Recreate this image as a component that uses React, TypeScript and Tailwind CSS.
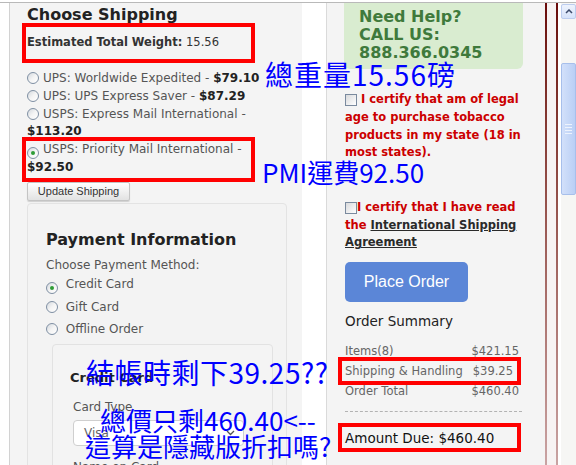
import React from "react";

function Radio({ checked = false }: { checked?: boolean }) {
  return (
    <span className="inline-flex items-center justify-center w-[12px] h-[12px] rounded-full border border-[#7f8fa3] bg-gradient-to-br from-[#d3d8de] via-[#f4f4f4] to-white align-[-2px] mr-[4px]">
      {checked && <span className="block w-[4px] h-[4px] rounded-full bg-[#2f9c36]" />}
    </span>
  );
}

function Checkbox({ gap = true }: { gap?: boolean }) {
  return (
    <span
      className={
        "inline-block w-[12px] h-[12px] border border-[#7a8a9e] bg-gradient-to-br from-[#d9dadc] to-white align-[-3px] " +
        (gap ? "mr-[4px]" : "mr-0")
      }
    />
  );
}

function LeftPanel() {
  return (
    <div className="w-[293px] h-full border-l border-[#d2d2d2] bg-[#f4f4f4] pl-[17px]">
      <h2 className="mt-[1.5px] text-[16px] leading-[20px] font-bold text-[#222]">Choose Shipping</h2>
      <div className="mt-[9px] text-[11.5px] leading-[16px] text-[#333]">
        <span className="font-bold">Estimated Total Weight:</span> 15.56
      </div>
      <div className="mt-[20.5px] w-[245px] text-[12px] leading-[17.8px] text-[#555]">
        <div>
          <Radio />UPS: Worldwide Expedited - <span className="font-bold text-[#222]">$79.10</span>
        </div>
        <div>
          <Radio />UPS: UPS Express Saver - <span className="font-bold text-[#222]">$87.29</span>
        </div>
        <div>
          <Radio />USPS: Express Mail International - <span className="font-bold text-[#222]">$113.20</span>
        </div>
        <div>
          <Radio checked />USPS: Priority Mail International - <span className="font-bold text-[#222]">$92.50</span>
        </div>
      </div>
      <button className="mt-[5px] h-[19px] w-[103px] rounded-[2px] border border-[#c4c4c4] bg-gradient-to-b from-white to-[#e2e2e2] shadow-[0_1px_1px_rgba(0,0,0,0.15)] font-['Liberation_Sans',Arial,sans-serif] text-[11px] leading-[17px] text-[#333]">
        Update Shipping
      </button>
      <div className="mt-[1px] w-[260px] h-[300px] rounded-[4px] border border-[#e3e3e3] bg-[#f3f3f3] pl-[18px] pt-[26.5px]">
        <h3 className="text-[16px] leading-[20px] font-bold text-[#222]">Payment Information</h3>
        <div className="mt-[8px] text-[12px] leading-[15px] text-[#555]">Choose Payment Method:</div>
        <div className="text-[12px] leading-[22.5px] text-[#555]">
          <div>
            <Radio checked /> Credit Card
          </div>
          <div>
            <Radio /> Gift Card
          </div>
          <div>
            <Radio /> Offline Order
          </div>
        </div>
        <div className="mt-[3px] ml-[6px] w-[221px] h-[200px] rounded-[4px] border border-[#e2e2e2] bg-[#f4f4f4] pl-[17px] pt-[25.5px]">
          <div className="text-[13px] leading-[16px] font-bold text-[#222]">Credit Card</div>
          <div className="mt-[12.5px] ml-[3px] text-[12px] leading-[16px] text-[#555]">Card Type</div>
          <div className="mt-[5px] ml-[3px] w-[171px] h-[26px] rounded-[4px] border border-[#cfcfcf] bg-white flex items-center justify-between pl-[10px] pr-[8px]">
            <span className="text-[12px] text-[#666]">Visa</span>
            <svg width="9" height="6" viewBox="0 0 9 6">
              <path d="M1 1 L4.5 4.5 L8 1" stroke="#555" strokeWidth="1.3" fill="none" />
            </svg>
          </div>
          <div className="mt-[12.7px] ml-[3px] text-[12px] leading-[16px] text-[#555]">Name on Card</div>
        </div>
      </div>
    </div>
  );
}

function RightPanel() {
  return (
    <div className="w-[219px] h-full border-l border-[#dadada] bg-[#f4f4f4] pl-[18px]">
      <div className="-ml-[1px] w-[179px] rounded-b-[6px] bg-[#d9ecd0] pl-[15px] pt-[4.5px] pb-[7.5px] text-[16px] leading-[18px] font-bold text-[#3f7a3c]">
        <div>Need Help?</div>
        <div>CALL US:</div>
        <div>888.366.0345</div>
      </div>
      <div className="mt-[22.2px] w-[180px] text-[11.5px] leading-[17.7px] font-bold text-[#cc0000]">
        <Checkbox />I certify that am of legal age to purchase tobacco products in my state (18 in most states).
      </div>
      <div className="mt-[37px] w-[180px] text-[11.5px] leading-[17.7px] font-bold text-[#cc0000]">
        <Checkbox gap={false} />I certify that I have read the{" "}
        <span className="text-[#2a2a2a] underline">International Shipping Agreement</span>
      </div>
      <button className="mt-[10px] w-[123px] h-[40px] rounded-[5px] bg-[#5b86d7] font-['Liberation_Sans',Arial,sans-serif] text-[16px] text-white">
        Place Order
      </button>
      <div className="mt-[10px] text-[13.5px] leading-[18px] text-[#222]">Order Summary</div>
      <div className="mt-[10.7px] w-[174px] text-[11.5px] leading-[20px] text-[#666]">
        <div className="flex justify-between">
          <span>Items(8)</span>
          <span>$421.15</span>
        </div>
        <div className="flex justify-between pr-[6px]">
          <span>Shipping &amp; Handling</span>
          <span>$39.25</span>
        </div>
        <div className="flex justify-between">
          <span>Order Total</span>
          <span>$460.40</span>
        </div>
      </div>
      <div className="mt-[10px] w-[177px] border-t border-dashed border-[#b3b3b3]" />
      <div className="mt-[17px] text-[13.5px] leading-[18px] text-[#111]">Amount Due: $460.40</div>
    </div>
  );
}

function Scrollbar() {
  return (
    <div className="w-[15px] h-full bg-[#f6f6f4] flex flex-col">
      <div className="mt-[1px] w-[15px] h-[15px] rounded-[2px] border border-[#bccdef] bg-gradient-to-b from-[#eef3fd] to-[#d6e3fa] flex items-center justify-center">
        <svg width="8" height="5" viewBox="0 0 8 5">
          <path d="M1 4 L4 1 L7 4" stroke="#3b4b6b" strokeWidth="1.5" fill="none" />
        </svg>
      </div>
      <div className="mt-[44px] w-[15px] h-[132px] rounded-[2px] border border-[#a7bfeb] bg-gradient-to-r from-[#d2e0fa] to-[#bacff5] flex flex-col items-center justify-center gap-[2px]">
        <div className="w-[7px] h-[1px] bg-[#eef3fd]" />
        <div className="w-[7px] h-[1px] bg-[#eef3fd]" />
        <div className="w-[7px] h-[1px] bg-[#eef3fd]" />
        <div className="w-[7px] h-[1px] bg-[#eef3fd]" />
      </div>
    </div>
  );
}

export default function App() {
  const blue = "absolute whitespace-nowrap leading-none text-[#0000ff] font-['Noto_Sans_CJK_TC','Noto_Sans_CJK_JP',sans-serif]";
  return (
    <div className="relative w-[576px] h-[465px] overflow-hidden bg-white font-['DejaVu_Sans',Verdana,sans-serif]">
      <div className="h-[2px]" />
      <div className="flex h-[463px] border-t border-[#b9b9b9]">
        <div className="w-[9px]" />
        <LeftPanel />
        <div className="w-[24px] bg-white" />
        <RightPanel />
        <div className="w-[2px] bg-gradient-to-b from-[#6a0a0a] to-[#c9a3a3]" />
        <div className="w-[9px] bg-[#f7f3f3]" />
        <div className="w-[2px] bg-gradient-to-b from-[#6a0a0a] to-[#c9a3a3]" />
        <div className="w-[3px] bg-white" />
        <Scrollbar />
      </div>

      {/* red annotation boxes */}
      <div className="absolute left-[22px] top-[23px] w-[233px] h-[40px] border-[4px] border-[#ff0000]" />
      <div className="absolute left-[22px] top-[137px] w-[233px] h-[45px] border-[4px] border-[#ff0000]" />
      <div className="absolute left-[338px] top-[357px] w-[183px] h-[28px] border-[4px] border-[#ff0000]" />
      <div className="absolute left-[338px] top-[423px] w-[183px] h-[29px] border-[4px] border-[#ff0000]" />

      {/* blue annotation texts */}
      <div className={blue + " left-[265px] top-[60px] text-[28px] tracking-[1px]"}>總重量15.56磅</div>
      <div className={blue + " left-[262px] top-[159px] text-[26px]"}>PMI運費92.50</div>
      <div className={blue + " left-[86px] top-[358px] text-[28px] tracking-[0.5px]"}>結帳時剩下39.25??</div>
      <div className={blue + " left-[100px] top-[407px] text-[26px]"}>總價只剩460.40&lt;--</div>
      <div className={blue + " left-[85px] top-[433px] text-[26px]"}>這算是隱藏版折扣嗎?</div>
    </div>
  );
}
